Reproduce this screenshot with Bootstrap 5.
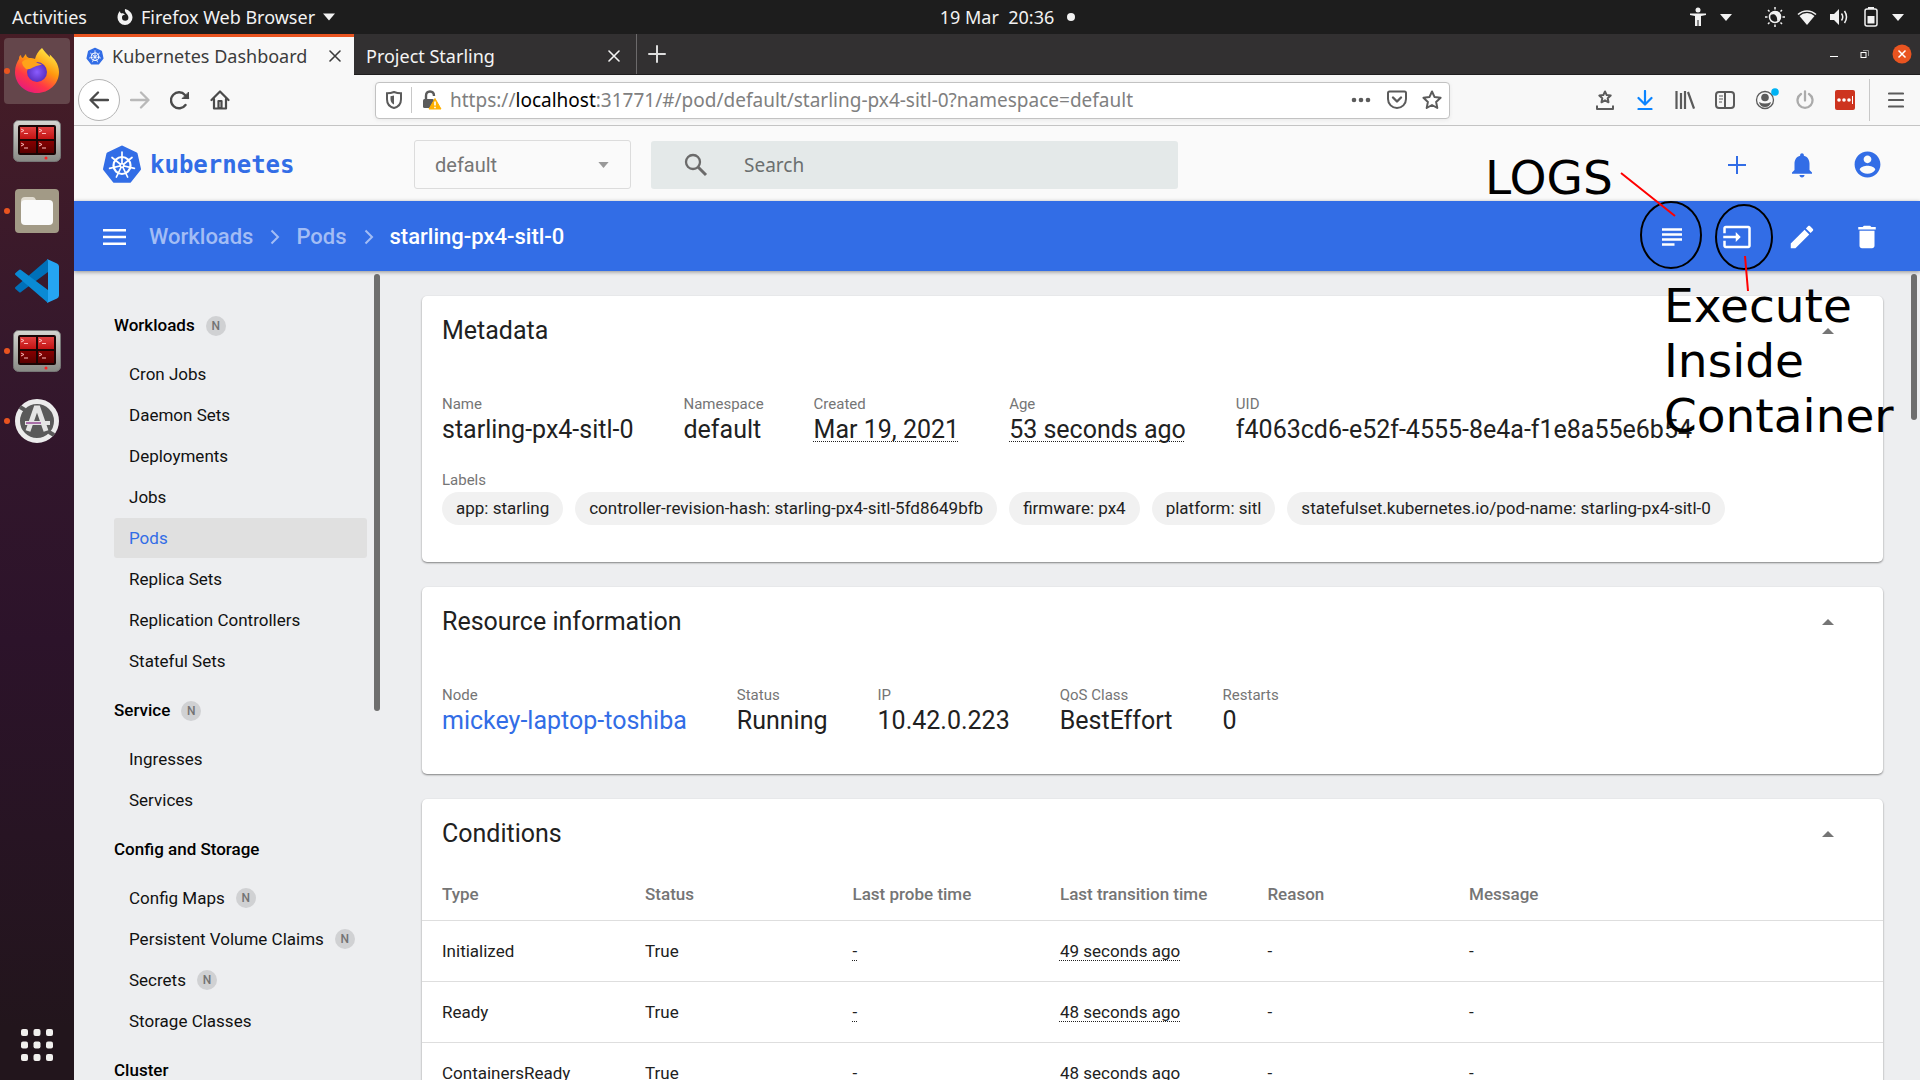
<!DOCTYPE html>
<html lang="en">
<head>
<meta charset="utf-8">
<meta name="viewport" content="width=device-width, initial-scale=1">
<title>Kubernetes Dashboard</title>
<link href="https://cdn.jsdelivr.net/npm/bootstrap@5.3.0/dist/css/bootstrap.min.css" rel="stylesheet">
<style>
:root{--k8s:#326de6;--ui:"Noto Sans","Open Sans",sans-serif}
body{font-family:Roboto,sans-serif;font-size:17px;line-height:24px;color:#212121;background:#edeef0}
button{border:0;background:none;padding:0;color:inherit}
a{color:inherit;text-decoration:none}
svg{display:block;flex:none}
.ico{width:40px;height:40px;display:flex;align-items:center;justify-content:center;flex:none}

/* desktop shell */
.topbar{height:34px;background:#1d1d1d;color:#f2f2f2;font-family:var(--ui);font-size:18px;display:grid;grid-template-columns:1fr auto 1fr;flex:none}
.clock{padding-left:96px;white-space:pre}
.app-menu{margin-left:30px}
.dock{width:74px;background:linear-gradient(#471d26,#35182c 30%,#2c132a 58%,#22151c 95%);flex:none}
.dock-item{height:66px;width:66px;margin:4px 4px 0;border-radius:4px;position:relative;display:flex;align-items:center;justify-content:center}
.dock-item:last-child{margin-bottom:2px}
.dock-item.on{background:#64464b}
.dock-item.run::before{content:"";position:absolute;left:0;top:30px;width:6px;height:6px;border-radius:50%;background:#e95420}

/* browser chrome */
.tabs{height:41px;background:#323031;font-family:var(--ui);font-size:18px;color:#f4f4f4;border-bottom:1px solid #1f1e1f;flex:none}
.tab-a{width:280px;background:#f8f8f8;border-top:3px solid #e95420;color:#3c3c3c;margin-bottom:-1px;padding:0 13px 0 12px}
.tab-b{width:283px;border-right:1px solid #6c6a6b;padding:3px 12px 0}
.win-btns{padding-right:8px;gap:22px}
.tools{height:51px;background:#f8f8f8;border-bottom:1px solid #c4c4c4;color:#5b5b5b;flex:none}
.back{width:42px;height:42px;border:1px solid #b4b4b4;border-radius:50%;background:#fff;display:flex;align-items:center;justify-content:center;margin-left:4px}
.urlbar{height:37px;width:1075px;margin-left:135px;background:#fff;border:1px solid #c2c2c2;border-radius:4px;font-family:var(--ui);font-size:19px;color:#808080;box-shadow:0 1px 4px #0001}
.urlbar b{font-weight:400;color:#000}
.addr{outline:0;white-space:nowrap}
.vline{width:1px;background:#c8c8c8}
.menu-btn{margin:0 4px 0 6px}

/* dashboard header */
.khead{height:75px;padding-top:2px;background:#fafafa;flex:none}
.brand{font-family:"DejaVu Sans Mono",monospace;font-weight:700;font-size:24px;color:var(--k8s)}
.ns{height:49px;border:1px solid #dcdcdc;border-radius:3px;background:#fafafa;font-size:20px;color:#757575;padding:0 20px;appearance:none;width:100%}
.ns-wrap{width:217px;position:relative}
.ns-wrap svg{position:absolute;right:22px;top:22px;pointer-events:none}
.find{width:527px;height:48px;background:#e4e9e9;border-radius:3px;color:#6b6f6f;margin-left:20px}
.find svg{margin:0 36px 0 33px}
.find input{border:0;outline:0;background:none;font-family:var(--ui);font-size:19px;color:#6b6f6f;padding:0;flex:1}
.find input::placeholder{color:#6b6f6f;opacity:1}
.acts{gap:25px;padding-right:33px}
.kbar{height:70px;padding-top:2px;background:var(--k8s);color:#fff;font-size:22px;font-weight:500;box-shadow:0 1px 4px #0006;z-index:2;flex:none}
.kbar a,.kbar .sep{color:#a3bdf5}
.kbar .sep{margin:0 16px 0 17px}
.burger{margin:0 23px 0 29px}

/* side menu */
.side{width:310px;flex:none;padding:26px 17px 0 40px;position:relative}
.side h6{height:57px;font-size:17px;font-weight:500;color:#000;margin:0}
.side a{height:40px;margin-bottom:1px;padding-left:15px;border-radius:3px;color:#111}
.side a.now{background:#e0e0e0;color:var(--k8s)}
.nb{width:20px;height:20px;border-radius:50%;background:#d0d1d3;color:#737373;font-size:12px;font-weight:500;line-height:20px;text-align:center;margin-left:11px}
.thumb{position:absolute;width:6px;border-radius:3px;background:#6e6e6e;top:3px}

/* content cards */
.panes{padding:25px 37px 0 38px;position:relative}
.pane{background:#fff;border-radius:5px;box-shadow:0 1px 2px #0007;margin-bottom:25px}
.pane header{height:70px;padding:0 49px 0 20px}
.pane h2{font-size:25px;font-weight:400;margin:0}
.facts{padding:26px 20px 0;gap:50px}
.facts dt,.cap{font-size:15px;font-weight:400;line-height:24px;color:#757575}
.facts dd{font-size:25px;line-height:28px;margin:0}
.dots{text-decoration:underline dotted 1px;text-underline-offset:3px;text-decoration-skip-ink:none}
.chips{gap:12px}
.chip{height:33px;line-height:32px;border-radius:17px;background:#f1f1f1;padding:0 14px}
.cond{width:100%;table-layout:fixed}
.cond th{height:51px;font-weight:500;color:#757575}
.cond td{height:61px;border-top:1px solid #dedede}
.cond th:first-child,.cond td:first-child{padding-left:20px}

/* annotations drawn over the window */
.notes{position:absolute;top:0;right:0;width:460px;height:460px;z-index:5;pointer-events:none;color:#000;font-family:"DejaVu Sans",sans-serif;font-size:47px;line-height:55px}
.notes svg,.notes p{position:absolute;margin:0}
.note-logs{left:25px;top:150px}
.note-exec{left:204px;top:278px}
</style>
<script src="https://cdn.jsdelivr.net/npm/bootstrap@5.3.0/dist/js/bootstrap.bundle.min.js"></script>
</head>
<body class="vh-100 d-flex flex-column overflow-hidden position-relative">

<svg width="0" height="0" class="position-absolute" aria-hidden="true">
  <defs>
    <linearGradient id="ff" x1=".8" y1="0" x2=".2" y2="1"><stop offset="0" stop-color="#fff44f"/><stop offset=".4" stop-color="#ff980e"/><stop offset=".7" stop-color="#ff3647"/><stop offset="1" stop-color="#e31587"/></linearGradient>
    <radialGradient id="globe"><stop offset="0" stop-color="#8a5cff"/><stop offset="1" stop-color="#5b2fc0"/></radialGradient>
    <linearGradient id="metal" x2="0" y2="1"><stop offset="0" stop-color="#d5d6d1"/><stop offset="1" stop-color="#888a85"/></linearGradient>
    <linearGradient id="redg" x2="0" y2="1"><stop offset="0" stop-color="#e04040"/><stop offset=".49" stop-color="#c01010"/><stop offset=".5" stop-color="#8a0000"/><stop offset="1" stop-color="#5a0000"/></linearGradient>
    <symbol id="k8s" viewBox="0 0 40 40">
      <path d="M20 2 34.1 8.8 37.5 24 27.8 36.2H12.2L2.5 24 5.9 8.8z" fill="#326de6" stroke="#326de6" stroke-width="3" stroke-linejoin="round"/>
      <g fill="none" stroke="#fff" stroke-linecap="round"><circle cx="20" cy="20.500" r="8.500" stroke-width="2.200"/>
      <path stroke-width="1.700" d="M20 20.500V7M20 20.500 30 12.500M20 20.500 32.400 23.300M20 20.500 25.600 32M20 20.500 14.400 32M20 20.500 7.600 23.300M20 20.500 10 12.500"/></g>
      <circle cx="20" cy="20.500" r="2.600" fill="#fff"/><circle cx="20" cy="20.500" r="1" fill="#326de6"/>
    </symbol>
    <symbol id="term" viewBox="0 0 48 42">
      <rect x=".5" y=".5" width="47" height="41" rx="5" fill="url(#metal)" stroke="#777"/>
      <rect x="5" y="5" width="38" height="30" rx="2" fill="#1a0505"/>
      <rect x="7" y="7" width="34" height="26" fill="url(#redg)"/>
      <path d="M24 6v28M6 20h36" stroke="#1a0505" stroke-width="2"/>
      <path d="M8 9l3 1.500-3 1.500M11 13.500h4M26 9l3 1.500-3 1.500M29 13.500h4M8 23l3 1.500L8 26M11 28h4M26 23l3 1.500-3 1.500M29 28h4" stroke="#fbb" fill="none"/>
      <circle cx="33" cy="38" r="1.500" fill="#f22"/>
    </symbol>
    <symbol id="x" viewBox="0 0 12 12"><path d="M1 1l10 10M11 1 1 11" stroke="currentColor" stroke-width="1.600" stroke-linecap="round"/></symbol>
    <symbol id="tri" viewBox="0 0 12 7"><path d="M0 0h12L6 7z" fill="currentColor"/></symbol>
    <symbol id="up" viewBox="0 0 12 6"><path d="M0 6h12L6 0z" fill="#757575"/></symbol>
    <symbol id="chev" viewBox="0 0 10 16"><path d="M1.500 1.500 8 8l-6.500 6.500" fill="none" stroke="currentColor" stroke-width="2"/></symbol>
  </defs>
</svg>

<div class="topbar align-items-center">
  <div class="d-flex align-items-center ps-2">
    <button type="button" class="ms-1">Activities</button>
    <button type="button" class="d-flex align-items-center app-menu">
      <svg width="16" height="18" viewBox="0 0 16 18"><path d="M8 1c4 1 7.500 4 7.500 8.500A7.500 7.500 0 0 1 .5 9.500C.5 6.500 1.500 4.500 3 3c0 1.500.5 2 1.500 2.500C6 5 7 6 8 6.500 7 7 5 7 5 9.500a3.200 3.200 0 0 0 6.400 0C11.400 6 7 5 8 1z" fill="#f2f2f2"/></svg>
      <span class="ms-2">Firefox Web Browser</span>
      <svg width="12" height="8" class="ms-2"><use href="#tri"/></svg>
    </button>
  </div>
  <div class="d-flex align-items-center gap-2"><span class="clock">19 Mar  20:36</span><svg width="10" height="10" class="ms-1"><circle cx="5" cy="5" r="4" fill="#f2f2f2"/></svg></div>
  <div class="d-flex align-items-center justify-content-end pe-3">
    <svg width="16" height="20" viewBox="0 0 16 20" fill="#f2f2f2"><circle cx="8" cy="3" r="2.500"/><path d="M0 6.500h16v1.500l-5 1V19H8.500v-6h-1v6H5V9L0 8z"/></svg>
    <svg width="12" height="7" style="margin-left:14px"><use href="#tri"/></svg>
    <svg width="20" height="20" viewBox="0 0 20 20" style="margin-left:33px"><g fill="none" stroke="#f2f2f2" stroke-width="1.500"><circle cx="10" cy="10" r="5.500"/><path d="M10 0v2.500M10 17.500V20M0 10h2.500M17.500 10H20M3 3l1.500 1.500M15.500 15.500 17 17M3 17l1.500-1.500M15.500 4.500 17 3"/></g><path d="M9 5a5 5 0 1 0 6 6c-3 2-7-1-6-6z" transform="rotate(180 10.500 9.500)" fill="#f2f2f2"/></svg>
    <svg width="20" height="17" viewBox="0 0 20 17" style="margin-left:12px"><path d="M1 5.500a13 13 0 0 1 18 0" fill="none" stroke="#f2f2f2" stroke-width="1.500"/><path d="M10 16 2.500 7a11 11 0 0 1 15 0z" fill="#f2f2f2"/></svg>
    <svg width="20" height="18" viewBox="0 0 20 18" style="margin-left:12px"><path d="M1 6h4l5-5v16l-5-5H1z" fill="#f2f2f2"/><path d="M12.500 5.500q2.500 3.500 0 7M15.500 3q4 6 0 12" fill="none" stroke="#f2f2f2" stroke-width="1.500"/></svg>
    <svg width="14" height="20" viewBox="0 0 14 20" style="margin-left:15px"><path d="M4 0h6v2H4z" fill="#f2f2f2"/><rect x="1" y="2" width="12" height="17" rx="2" fill="none" stroke="#f2f2f2" stroke-width="1.500"/><path d="M3.500 9h7v7.500h-7z" fill="#f2f2f2"/></svg>
    <svg width="12" height="7" style="margin-left:14px"><use href="#tri"/></svg>
  </div>
</div>

<div class="d-flex flex-grow-1 overflow-hidden">
  <nav class="dock d-flex flex-column" aria-label="Dock">
    <a href="#" class="dock-item on run" aria-label="Firefox"><svg width="46" height="48" viewBox="0 0 46 48">
      <path d="M28 1c3 4 5 6 8 9 0-1 0-2-1-3 5 4 10 10 10 18 0 12-10 21-22 21S1 37 1 25c0-6 2-10 4-13 0-2 0-3 2-4 0 2 1 3 2 3 1-2 2-3 3-4 0 2 1 3 3 4 3 0 4 0 6 1 1-4 3-8 7-11z" fill="url(#ff)"/>
      <circle cx="23" cy="25" r="10" fill="url(#globe)"/>
      <path d="M8 15c4-4 10-3 14 0 3 2 5 2 6 2-2 2-5 1-8 3-3 1-4 3-8 2-2-2-4-4-4-7z" fill="#ffa31a"/></svg></a>
    <a href="#" class="dock-item" aria-label="Terminator"><svg width="48" height="42"><use href="#term"/></svg></a>
    <a href="#" class="dock-item run" aria-label="Files"><svg width="44" height="44" viewBox="0 0 44 44"><rect width="44" height="44" rx="4" fill="#a29a86"/><path d="M6 12q0-4 4-4h8q2 0 3 3h12v16H6z" fill="#e2ddd2"/><rect x="6" y="11" width="32" height="25" rx="4" fill="#fafafa"/></svg></a>
    <a href="#" class="dock-item" aria-label="Visual Studio Code"><svg width="44" height="44" viewBox="0 0 44 44"><path d="M33 0v13L6 33q-1 1-2 0l-3.500-3q-1-1 0-2z" fill="#0070b8"/><path d="M33 44V31L6 11q-1-1-2 0L.5 14q-1 1 0 2z" fill="#0a8ad4"/><path d="M32 0l10 4.500q2 1 2 3v29q0 2-2 3L32 44q1-1 1-3V3q0-2-1-3z" fill="#25a5f2"/></svg></a>
    <a href="#" class="dock-item run" aria-label="Terminator"><svg width="48" height="42"><use href="#term"/></svg></a>
    <a href="#" class="dock-item run" aria-label="Software Updater"><svg width="44" height="44" viewBox="0 0 44 44"><circle cx="22" cy="22" r="19.500" fill="#5a5a5a" stroke="#ececec" stroke-width="5"/><path d="M5 8l5 3M34 33l5 3" stroke="#5a5a5a" stroke-width="4"/><path d="M13 32 21 9h2l8 23" fill="none" stroke="#e4e4e4" stroke-width="5"/><path d="M10 24h25" stroke="#e4e4e4" stroke-width="4"/><path d="M11 24h15" stroke="#a86fa8" stroke-width="2"/></svg></a>
    <a href="#" class="dock-item mt-auto" aria-label="Show applications"><svg width="32" height="32" viewBox="0 0 32 32" fill="#f2f0ee"><g id="gr"><rect width="7" height="7" rx="2"/><rect x="12.500" width="7" height="7" rx="2"/><rect x="25" width="7" height="7" rx="2"/></g><use href="#gr" y="12.500"/><use href="#gr" y="25"/></svg></a>
  </nav>

  <div class="d-flex flex-column flex-grow-1 overflow-hidden">
    <div class="tabs d-flex">
      <div class="tab-a d-flex align-items-center"><svg width="18" height="19" class="me-2"><use href="#k8s"/></svg><span class="flex-grow-1">Kubernetes Dashboard</span><button type="button" aria-label="Close tab"><svg width="12" height="12"><use href="#x"/></svg></button></div>
      <div class="tab-b d-flex align-items-center"><span class="flex-grow-1">Project Starling</span><button type="button" aria-label="Close tab" class="me-1"><svg width="12" height="12"><use href="#x"/></svg></button></div>
      <button type="button" class="ico" aria-label="New tab"><svg width="18" height="18" viewBox="0 0 18 18"><path d="M9 1v16M1 9h16" stroke="#ddd" stroke-width="2" stroke-linecap="round"/></svg></button>
      <div class="ms-auto d-flex align-items-center win-btns">
        <button type="button" aria-label="Minimize"><svg width="8" height="8"><path d="M0 6.500h8" stroke="#fff"/></svg></button>
        <button type="button" aria-label="Restore"><svg width="10" height="8" viewBox="0 0 10 8" fill="none"><path d="M3 .5h5.500V6" stroke="#999"/><rect x="1" y="2.500" width="5" height="5" stroke="#fff"/></svg></button>
        <button type="button" aria-label="Close window"><svg width="20" height="20" viewBox="0 0 20 20"><circle cx="10" cy="10" r="9.500" fill="#e95420"/><path d="M6.500 6.500l7 7M13.500 6.500l-7 7" stroke="#fff" stroke-width="1.500"/></svg></button>
      </div>
    </div>

    <div class="tools d-flex align-items-center">
      <button type="button" class="back" aria-label="Back"><svg width="20" height="18" viewBox="0 0 20 18" fill="none" stroke="#4a4a4a" stroke-width="2.300" stroke-linecap="round" stroke-linejoin="round"><path d="M19 9H2M9 1.500 1.500 9 9 16.500"/></svg></button>
      <button type="button" class="ico" aria-label="Forward"><svg width="20" height="18" viewBox="0 0 20 18" fill="none" stroke="#b9b9b9" stroke-width="2.300" stroke-linecap="round" stroke-linejoin="round"><path d="M1 9h17M11 1.500 18.500 9 11 16.500"/></svg></button>
      <button type="button" class="ico" aria-label="Reload"><svg width="20" height="19" viewBox="0 0 20 19" fill="none" stroke="#4a4a4a" stroke-width="2.400" stroke-linecap="round" stroke-linejoin="round"><path d="M15.500 14A8 8 0 1 1 15 4l3 3"/><path d="M18.500 1.500v6h-6z" fill="#4a4a4a" stroke-width="1"/></svg></button>
      <button type="button" class="ico" aria-label="Home"><svg width="20" height="20" viewBox="0 0 20 20" fill="none" stroke="#4a4a4a" stroke-width="2.200" stroke-linecap="round" stroke-linejoin="round"><path d="M1.500 10 10 1.500l8.500 8.500M4 9v9.500h12V9"/><rect x="8.500" y="11" width="3" height="7"/></svg></button>
      <div class="urlbar d-flex align-items-center">
        <svg width="16" height="18" viewBox="0 0 16 18" style="margin-left:10px"><path d="M8 1c2 .8 4.500 1.300 7 1.300v6C15 13 12 16 8 17 4 16 1 13 1 8.300v-6C3.500 2.300 6 1.800 8 1z" fill="none" stroke="#5b5b5b" stroke-width="2"/><path d="M8 4.500v9c-2-1-3.500-2.500-3.500-5.500V5.200z" fill="#5b5b5b"/></svg>
        <span class="vline" style="height:26px;margin:0 10px 0 9px"></span>
        <svg width="20" height="20" viewBox="0 0 20 20"><path d="M4 10V6q0-4.500 4-4.500T12 6" fill="none" stroke="#5b5b5b" stroke-width="2.400"/><rect x="1" y="9" width="11" height="9" rx="1.500" fill="#5b5b5b"/><path d="M13 8.500 19 19H7z" fill="#ffb100" stroke="#ffb100" stroke-linejoin="round"/><path d="M13 11.500v4M13 16.800v1.500" stroke="#fff" stroke-width="1.600"/></svg>
        <div class="addr flex-grow-1 ms-2" role="textbox" contenteditable="true" spellcheck="false" aria-label="Address">https://<b>localhost</b>:31771/#/pod/default/starling-px4-sitl-0?namespace=default</div>
        <svg width="20" height="6" viewBox="0 0 20 6" fill="#5b5b5b"><circle cx="3" cy="3" r="2.300"/><circle cx="10" cy="3" r="2.300"/><circle cx="17" cy="3" r="2.300"/></svg>
        <svg width="20" height="20" viewBox="0 0 20 20" style="margin-left:16px" fill="none" stroke="#5b5b5b" stroke-width="2" stroke-linejoin="round" stroke-linecap="round"><path d="M2.500 1.500h15q1.500 0 1.500 1.500v6a9 9 0 0 1-18 0V3q0-1.500 1.500-1.500z"/><path d="M6 7.500 10 11.500l4-4" stroke-width="2.400"/></svg>
        <svg width="20" height="20" viewBox="0 0 20 20" style="margin:0 7px 0 15px"><path d="M10 1.500l2.600 5.600 6 .7-4.500 4.100 1.200 6.100-5.300-3-5.300 3 1.200-6.100L1.400 7.800l6-.7z" fill="none" stroke="#5b5b5b" stroke-width="2" stroke-linejoin="round"/></svg>
      </div>
      <div class="ms-auto d-flex align-items-center">
        <button type="button" class="ico" aria-label="Bookmarks"><svg width="18" height="20" viewBox="0 0 18 20" fill="none" stroke="#5b5b5b" stroke-width="2" stroke-linejoin="round"><path d="M9 1.500l1.700 3.600 4 .5-3 2.700.8 4L9 10.300l-3.500 2 .8-4-3-2.700 4-.5z"/><path d="M1 15.500V19h16v-3.500"/></svg></button>
        <button type="button" class="ico" aria-label="Downloads"><svg width="16" height="20" viewBox="0 0 16 20" fill="none" stroke="#0a84ff" stroke-width="2.200" stroke-linecap="round" stroke-linejoin="round"><path d="M8 1v13M1.500 8 8 14.500 14.500 8M1.500 19h13"/></svg></button>
        <button type="button" class="ico" aria-label="Library"><svg width="20" height="18" viewBox="0 0 20 18" fill="none" stroke="#5b5b5b" stroke-width="2.200"><path d="M1.500 0v18M6 2v16M10 0v18M13 1l6 16.500"/></svg></button>
        <button type="button" class="ico" aria-label="Sidebars"><svg width="20" height="18" viewBox="0 0 20 18" fill="none" stroke="#5b5b5b" stroke-width="2"><rect x="1" y="1" width="18" height="16" rx="3"/><path d="M10 1v16"/><path d="M4 5h4M4 8h4M4 11h3" stroke-width="1.200"/></svg></button>
        <button type="button" class="ico" aria-label="Account"><svg width="28" height="28" viewBox="0 0 28 28"><circle cx="14" cy="14" r="8.500" fill="none" stroke="#5b5b5b" stroke-width="1.300"/><circle cx="14" cy="11.500" r="3.800" fill="#5b5b5b"/><path d="M8 16q6 3 12 0-1 5-6 5t-6-5z" fill="#5b5b5b"/><circle cx="24" cy="6" r="3.800" fill="#00b3f4"/></svg></button>
        <button type="button" class="ico" aria-label="Power"><svg width="18" height="20" viewBox="0 0 18 20" fill="none" stroke="#ababab" stroke-width="2.300" stroke-linecap="round"><path d="M9 1.500v9M5 4a7.500 7.500 0 1 0 8 0"/></svg></button>
        <button type="button" class="ico" aria-label="Passwords"><svg width="20" height="20" viewBox="0 0 20 20"><rect width="20" height="20" rx="2" fill="#cd341f"/><g fill="#fff"><circle cx="4" cy="10" r="1.800"/><circle cx="9" cy="10" r="1.800"/><circle cx="14" cy="10" r="1.800"/><path d="M17 6h1v8h-1z"/></g></svg></button>
        <span class="vline ms-1" style="height:42px"></span>
        <button type="button" class="ico menu-btn" aria-label="Menu"><svg width="16" height="16" viewBox="0 0 16 16" stroke="#5b5b5b" stroke-width="2.200" stroke-linecap="round"><path d="M1 1.500h14M1 8h14M1 14.500h14"/></svg></button>
      </div>
    </div>

    <header class="khead d-flex align-items-center">
      <a href="#" class="d-flex align-items-center" style="width:340px;padding-left:28px"><svg width="40" height="40"><use href="#k8s"/></svg><span class="brand ms-2">kubernetes</span></a>
      <div class="ns-wrap"><select class="ns" aria-label="Namespace"><option>default</option></select><svg width="11" height="6" color="#999"><use href="#tri"/></svg></div>
      <label class="find d-flex align-items-center">
        <svg width="24" height="24" viewBox="0 0 24 24" fill="none" stroke="#6b6b6b" stroke-width="2.300"><circle cx="9" cy="9" r="7"/><path d="M14 14l8 8" stroke-width="3"/></svg>
        <input type="text" placeholder="Search" aria-label="Search">
      </label>
      <div class="acts ms-auto d-flex">
        <button type="button" class="ico" aria-label="Create"><svg width="18" height="18" viewBox="0 0 18 18"><path d="M9 0v18M0 9h18" stroke="#326de6" stroke-width="2"/></svg></button>
        <button type="button" class="ico" aria-label="Notifications"><svg width="30" height="30" viewBox="0 0 24 24" fill="#326de6"><path d="M12 22c1.100 0 2-.9 2-2h-4c0 1.100.9 2 2 2zm6-6v-5c0-3.070-1.630-5.640-4.500-6.320V4c0-.83-.67-1.500-1.500-1.500s-1.500.67-1.500 1.500v.68C7.640 5.360 6 7.920 6 11v5l-2 2v1h16v-1l-2-2z"/></svg></button>
        <button type="button" class="ico" aria-label="Profile"><svg width="31" height="31" viewBox="0 0 24 24" fill="#326de6"><path d="M12 2C6.480 2 2 6.480 2 12s4.480 10 10 10 10-4.480 10-10S17.520 2 12 2zm0 3c1.660 0 3 1.340 3 3s-1.340 3-3 3-3-1.340-3-3 1.340-3 3-3zm0 14.200c-2.500 0-4.710-1.280-6-3.220.030-1.990 4-3.080 6-3.080 1.990 0 5.970 1.090 6 3.080-1.290 1.940-3.500 3.220-6 3.220z"/></svg></button>
      </div>
    </header>

    <div class="kbar d-flex align-items-center position-relative">
      <button type="button" class="burger" aria-label="Toggle menu"><svg width="23" height="16" viewBox="0 0 23 16"><path d="M0 1.200h23M0 8h23M0 14.800h23" stroke="#fff" stroke-width="2.400"/></svg></button>
      <a href="#">Workloads</a><svg class="sep" width="10" height="16"><use href="#chev"/></svg>
      <a href="#">Pods</a><svg class="sep" width="10" height="16"><use href="#chev"/></svg>
      <span>starling-px4-sitl-0</span>
      <div class="acts ms-auto d-flex">
        <button type="button" class="ico" aria-label="View logs"><svg width="30" height="30" viewBox="0 0 24 24" fill="#fff"><path d="M14 17H4v2h10v-2zm6-8H4v2h16V9zM4 15h16v-2H4v2zM4 5v2h16V5H4z"/></svg></button>
        <button type="button" class="ico" aria-label="Exec into pod"><svg width="30" height="30" viewBox="0 0 24 24" fill="#fff"><path d="M21 3.010H3c-1.100 0-2 .9-2 2V9h2V4.990h18v14.030H3V15H1v4.010c0 1.100.9 1.980 2 1.980h18c1.100 0 2-.88 2-1.980v-14c0-1.110-.9-2-2-2zM11 16l4-4-4-4v3H1v2h10v3z"/></svg></button>
        <button type="button" class="ico" aria-label="Edit"><svg width="30" height="30" viewBox="0 0 24 24" fill="#fff"><path d="M3 17.250V21h3.750L17.810 9.940l-3.750-3.750L3 17.250zM20.710 7.040c.39-.39.39-1.020 0-1.410l-2.340-2.340c-.39-.39-1.020-.39-1.410 0l-1.830 1.830 3.750 3.750 1.830-1.830z"/></svg></button>
        <button type="button" class="ico" aria-label="Delete"><svg width="30" height="30" viewBox="0 0 24 24" fill="#fff"><path d="M6 19c0 1.100.9 2 2 2h8c1.100 0 2-.9 2-2V7H6v12zM19 4h-3.500l-1-1h-5l-1 1H5v2h14V4z"/></svg></button>
      </div>
    </div>

    <div class="d-flex flex-grow-1 overflow-hidden">
      <nav class="side" aria-label="Resources">
        <h6 class="d-flex align-items-center">Workloads<span class="nb">N</span></h6>
        <a href="#" class="d-flex align-items-center">Cron Jobs</a>
        <a href="#" class="d-flex align-items-center">Daemon Sets</a>
        <a href="#" class="d-flex align-items-center">Deployments</a>
        <a href="#" class="d-flex align-items-center">Jobs</a>
        <a href="#" class="d-flex align-items-center now">Pods</a>
        <a href="#" class="d-flex align-items-center">Replica Sets</a>
        <a href="#" class="d-flex align-items-center">Replication Controllers</a>
        <a href="#" class="d-flex align-items-center">Stateful Sets</a>
        <h6 class="d-flex align-items-center">Service<span class="nb">N</span></h6>
        <a href="#" class="d-flex align-items-center">Ingresses</a>
        <a href="#" class="d-flex align-items-center">Services</a>
        <h6 class="d-flex align-items-center">Config and Storage</h6>
        <a href="#" class="d-flex align-items-center">Config Maps<span class="nb">N</span></a>
        <a href="#" class="d-flex align-items-center">Persistent Volume Claims<span class="nb">N</span></a>
        <a href="#" class="d-flex align-items-center">Secrets<span class="nb">N</span></a>
        <a href="#" class="d-flex align-items-center">Storage Classes</a>
        <h6 class="d-flex align-items-center">Cluster</h6>
        <span class="thumb" style="right:4px;height:437px"></span>
      </nav>

      <main class="panes flex-grow-1 overflow-hidden">
        <section class="pane" style="padding-bottom:37px">
          <header class="d-flex align-items-center justify-content-between"><h2>Metadata</h2><button type="button" aria-label="Collapse"><svg width="12" height="6"><use href="#up"/></svg></button></header>
          <dl class="facts d-flex mb-0">
            <div><dt>Name</dt><dd>starling-px4-sitl-0</dd></div>
            <div><dt>Namespace</dt><dd>default</dd></div>
            <div><dt>Created</dt><dd class="dots">Mar 19, 2021</dd></div>
            <div><dt>Age</dt><dd class="dots">53 seconds ago</dd></div>
            <div><dt>UID</dt><dd>f4063cd6-e52f-4555-8e4a-f1e8a55e6b54</dd></div>
          </dl>
          <div class="px-3 mx-1 pt-4"><div class="cap">Labels</div>
            <div class="d-flex chips"><span class="chip">app: starling</span><span class="chip">controller-revision-hash: starling-px4-sitl-5fd8649bfb</span><span class="chip">firmware: px4</span><span class="chip">platform: sitl</span><span class="chip">statefulset.kubernetes.io/pod-name: starling-px4-sitl-0</span></div>
          </div>
        </section>

        <section class="pane" style="padding-bottom:39px">
          <header class="d-flex align-items-center justify-content-between"><h2>Resource information</h2><button type="button" aria-label="Collapse"><svg width="12" height="6"><use href="#up"/></svg></button></header>
          <dl class="facts d-flex mb-0">
            <div><dt>Node</dt><dd><a href="#" style="color:var(--k8s)">mickey-laptop-toshiba</a></dd></div>
            <div><dt>Status</dt><dd>Running</dd></div>
            <div><dt>IP</dt><dd>10.42.0.223</dd></div>
            <div><dt>QoS Class</dt><dd>BestEffort</dd></div>
            <div><dt>Restarts</dt><dd>0</dd></div>
          </dl>
        </section>

        <section class="pane">
          <header class="d-flex align-items-center justify-content-between"><h2>Conditions</h2><button type="button" aria-label="Collapse"><svg width="12" height="6"><use href="#up"/></svg></button></header>
          <table class="cond">
            <colgroup><col style="width:15.2%"><col style="width:14.2%"><col style="width:14.2%"><col style="width:14.2%"><col style="width:13.8%"><col></colgroup>
            <thead><tr><th>Type</th><th>Status</th><th>Last probe time</th><th>Last transition time</th><th>Reason</th><th>Message</th></tr></thead>
            <tbody>
              <tr><td>Initialized</td><td>True</td><td><span class="dots">-</span></td><td><span class="dots">49 seconds ago</span></td><td>-</td><td>-</td></tr>
              <tr><td>Ready</td><td>True</td><td><span class="dots">-</span></td><td><span class="dots">48 seconds ago</span></td><td>-</td><td>-</td></tr>
              <tr><td>ContainersReady</td><td>True</td><td><span class="dots">-</span></td><td><span class="dots">48 seconds ago</span></td><td>-</td><td>-</td></tr>
            </tbody>
          </table>
        </section>
        <span class="thumb" style="right:3px;height:146px"></span>
      </main>
    </div>
  </div>
</div>

<div class="notes">
  <p class="note-logs">LOGS</p>
  <p class="note-exec">Execute<br>Inside<br>Container</p>
  <svg width="460" height="460" fill="none" stroke-width="2"><g stroke="#000"><ellipse cx="211" cy="235" rx="30" ry="33"/><ellipse cx="284" cy="237" rx="28" ry="32"/></g><path d="M161 173l54 43M285 256l3 35" stroke="#f00"/></svg>
</div>
</body>
</html>
